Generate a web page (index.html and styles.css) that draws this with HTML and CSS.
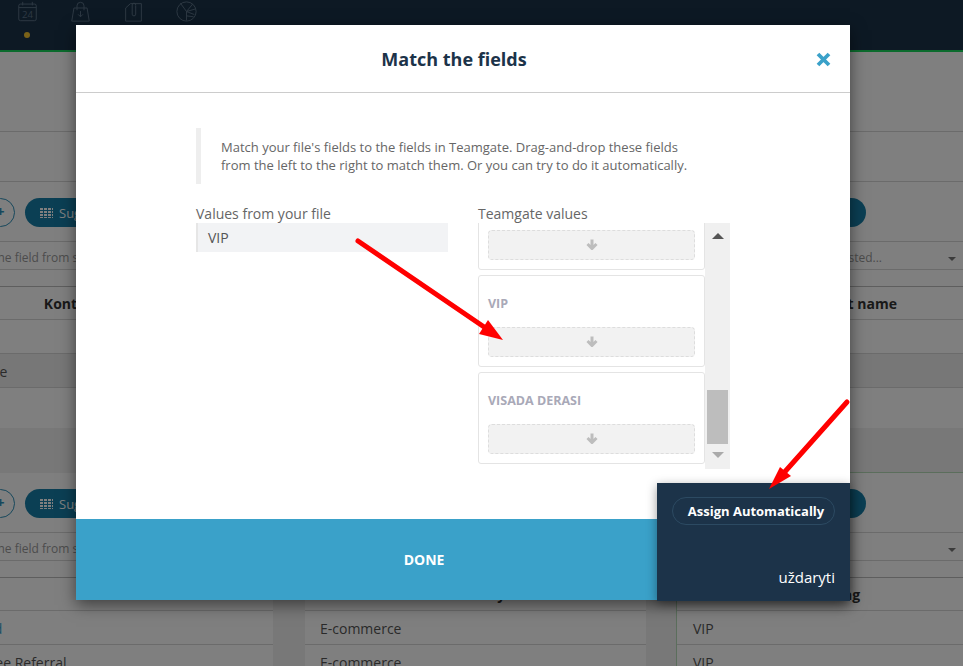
FILE: index.html
```html
<!DOCTYPE html>
<html lang="en">
<head>
    <meta charset="UTF-8">
    <meta name="viewport" content="width=device-width, initial-scale=1.0">
    <title>Match the fields</title>
    <link rel="stylesheet" href="styles.css">
</head>
<body>
    <header class="nav">
        <div class="nav-item active">
            <svg class="nav-icon" viewBox="0 0 24 24">
                <rect x="2" y="3.500" width="20" height="19" rx="2"></rect>
                <path d="M2 7.500h20M6.500 1v4M17.500 1v4"></path>
                <text x="12" y="19.500" class="nav-date">24</text>
            </svg>
        </div>
        <div class="nav-item">
            <svg class="nav-icon" viewBox="0 0 24 24">
                <path d="M4.500 8h15L22 23H2zM8 10.500V5.500a4 4 0 0 1 8 0v5M12 11.500v6.500M9.300 15.300l2.700 2.700 2.700-2.700"></path>
            </svg>
        </div>
        <div class="nav-item">
            <svg class="nav-icon" viewBox="0 0 24 24">
                <path d="M3 23V8l5.500-5H8M9 3h12v20H3M14.500 5v10a2 2 0 0 1-4 0V4.500a2 2 0 0 1 4 0"></path>
            </svg>
        </div>
        <div class="nav-item">
            <svg class="nav-icon" viewBox="0 0 24 24">
                <circle cx="12" cy="12" r="11"></circle>
                <path d="M12 12L5 2.500M12 12l7-8.500M12 12l10.500-3M12 12v10.500M12 12l9 3.500M12 17l8 1"></path>
            </svg>
        </div>
    </header>

    <div class="band band-tall"></div>
    <div class="band band-short"></div>

    <section class="columns">
        <div class="col">
            <div class="toolbar">
                <span class="round-btn">+</span>
                <span class="pill"><span class="grid-icon"></span>Suggest</span>
            </div>
            <div class="select select-first">Select the field from suggested...<span class="caret"></span></div>
            <div class="col-head">Kontakto grupės</div>
            <div class="row"></div>
            <div class="row row-dark">Purchase</div>
            <div class="row row-last"></div>
        </div>
        <div class="col">
            <div class="toolbar"></div>
            <div class="select"></div>
            <div class="col-head"></div>
            <div class="row"></div>
            <div class="row row-dark"></div>
            <div class="row row-last"></div>
        </div>
        <div class="col">
            <div class="toolbar">
                <span class="round-btn"></span>
                <span class="pill"></span>
            </div>
            <div class="select select-third">listed...<span class="caret"></span></div>
            <div class="col-head">Contact name</div>
            <div class="row"></div>
            <div class="row row-dark"></div>
            <div class="row row-last"></div>
        </div>
    </section>

    <section class="columns columns-lower">
        <div class="col">
            <div class="toolbar">
                <span class="round-btn">+</span>
                <span class="pill"><span class="grid-icon"></span>Suggest</span>
            </div>
            <div class="select select-first">Select the field from suggested...<span class="caret"></span></div>
            <div class="col-head"></div>
            <div class="row link">Inbound</div>
            <div class="row">Employee Referral</div>
        </div>
        <div class="col">
            <div class="toolbar"></div>
            <div class="select"></div>
            <div class="col-head">Industry</div>
            <div class="row">E-commerce</div>
            <div class="row">E-commerce</div>
        </div>
        <div class="col col-done">
            <div class="toolbar">
                <span class="round-btn"></span>
                <span class="pill"></span>
            </div>
            <div class="select"><span class="caret"></span></div>
            <div class="col-head">Tag</div>
            <div class="row">VIP</div>
            <div class="row">VIP</div>
        </div>
    </section>

    <div class="overlay"></div>

    <div class="modal">
        <div class="modal-head">
            <h1>Match the fields</h1>
            <svg class="close" viewBox="0 0 15 15">
                <path d="M2 2l11 11M13 2L2 13"></path>
            </svg>
        </div>
        <div class="modal-body">
            <p class="note">Match your file's fields to the fields in Teamgate. Drag-and-drop these fields<br>from the left to the right to match them. Or you can try to do it automatically.</p>
            <div class="match">
                <div class="match-left">
                    <div class="match-label">Values from your file</div>
                    <div class="value">VIP</div>
                </div>
                <div class="match-right">
                    <div class="match-label">Teamgate values</div>
                    <div class="scroller">
                        <div class="card-list">
                            <div class="card">
                                <div class="drop"><svg class="drop-arrow" viewBox="0 0 12 11"><path d="M6 .5v8M1.500 5l4.500 4.500L10.500 5"></path></svg></div>
                            </div>
                            <div class="card">
                                <div class="card-name">VIP</div>
                                <div class="drop"><svg class="drop-arrow" viewBox="0 0 12 11"><path d="M6 .5v8M1.500 5l4.500 4.500L10.500 5"></path></svg></div>
                            </div>
                            <div class="card">
                                <div class="card-name">VISADA DERASI</div>
                                <div class="drop"><svg class="drop-arrow" viewBox="0 0 12 11"><path d="M6 .5v8M1.500 5l4.500 4.500L10.500 5"></path></svg></div>
                            </div>
                        </div>
                        <div class="scrollbar">
                            <span class="scroll-up"></span>
                            <span class="scroll-thumb"></span>
                            <span class="scroll-down"></span>
                        </div>
                    </div>
                </div>
            </div>
        </div>
        <div class="modal-foot">DONE</div>
    </div>

    <div class="hint">
        <div class="hint-btn">Assign Automatically</div>
        <div class="hint-close">uždaryti</div>
    </div>

    <svg class="arrows" viewBox="0 0 963 666">
        <path class="arrow-line" d="M358 241L490 331"></path>
        <path class="arrow-head" d="M503 340L488 320L479 334z"></path>
        <path class="arrow-line" d="M847 402L782 475"></path>
        <path class="arrow-head" d="M769 489L780 467L791 476z"></path>
    </svg>
</body>
</html>
```

FILE: styles.css
```css
html, body {
    height: 100%;
}

body {
    margin: 0;
    height: 666px;
    overflow: hidden;
    position: relative;
    font-family: 'Open Sans', 'Liberation Sans', sans-serif;
    font-size: 14px;
    color: #333;
    background-color: #f0f0f0;
}

/* page behind the dialog */
.nav {
    height: 50px;
    display: flex;
    background-color: #1b3349;
    border-bottom: 2px solid #16d65a;
}

.nav-item {
    width: 52px;
    position: relative;
    display: flex;
    justify-content: center;
    padding-top: 1px;
    padding-left: 1px;
}

.nav-icon {
    width: 21px;
    height: 21px;
    fill: none;
    stroke: #5b7186;
    stroke-width: 1.100;
}

.nav-date {
    font-family: 'Open Sans', sans-serif;
    font-size: 11px;
    text-anchor: middle;
    fill: #5b7186;
    stroke: none;
}

.nav-item.active::after {
    content: "";
    position: absolute;
    left: 24px;
    top: 32px;
    width: 6px;
    height: 6px;
    border-radius: 50%;
    background-color: #f4c430;
}

.band {
    background-color: #fff;
    border-bottom: 1px solid #d6d6d6;
    box-sizing: border-box;
}

.band-tall {
    height: 80px;
}

.band-short {
    height: 50px;
}

.columns {
    display: grid;
    grid-template-columns: 342px 342px 342px;
    column-gap: 31px;
    margin-left: -69px;
    width: 1100px;
}

.columns-lower {
    margin-top: 45px;
}

.col {
    background-color: #fff;
}

.col:nth-child(2) {
    margin-left: 1px;
}

.col:nth-child(2) .row {
    padding-left: 15px;
}

.col-done {
    box-shadow: -1px -1px 0 #b7dcb9;
}

.toolbar {
    height: 60px;
    box-sizing: border-box;
    padding: 16px 0 0 55px;
    display: flex;
    gap: 10px;
    border-bottom: 1px solid #d6d6d6;
}

.round-btn {
    width: 29px;
    height: 29px;
    box-sizing: border-box;
    border: 1px solid #2d8fb8;
    border-radius: 50%;
    color: #2d8fb8;
    font-weight: 700;
    text-align: center;
    line-height: 25px;
}

.pill {
    width: 95px;
    height: 29px;
    padding-left: 15px;
    box-sizing: border-box;
    display: flex;
    align-items: center;
    gap: 6px;
    border-radius: 15px;
    background-color: #167fa8;
    color: #fff;
    font-size: 13px;
    white-space: nowrap;
}

.grid-icon {
    width: 13px;
    height: 10px;
    background:
        repeating-linear-gradient(to right, transparent 0 3px, #167fa8 3px 4px),
        repeating-linear-gradient(to bottom, #fff 0 2px, #167fa8 2px 3px);
}

.select {
    height: 28px;
    box-sizing: border-box;
    position: relative;
    padding-left: 26px;
    font-size: 12px;
    line-height: 31px;
    white-space: nowrap;
    color: #999;
    border-bottom: 1px solid #d6d6d6;
}

.select-third {
    padding-left: 0;
    text-align: right;
    padding-right: 137px;
}

.caret {
    position: absolute;
    left: 271px;
    top: 15px;
    border-style: solid;
    border-width: 4px 4px 0;
    border-color: #777 transparent transparent;
}

.col-head {
    margin-top: 16px;
    height: 34px;
    box-sizing: border-box;
    border-top: 1px solid #bdbdbd;
    border-bottom: 1px solid #d6d6d6;
    font-weight: 700;
    line-height: 33px;
    text-align: center;
    color: #333;
}

.row {
    height: 34px;
    box-sizing: border-box;
    padding-left: 16px;
    line-height: 35px;
    color: #555;
    border-bottom: 1px solid #d6d6d6;
}

.row-dark {
    background-color: #eee;
}

.row-last {
    height: 40px;
    border-bottom: 0;
}

.link {
    color: #3aa1c9;
}

.overlay {
    position: absolute;
    inset: 0;
    background-color: rgba(0, 0, 0, 0.5);
}

/* dialog */
.modal {
    position: absolute;
    left: 76px;
    top: 25px;
    width: 774px;
    height: 575px;
    display: flex;
    flex-direction: column;
    background-color: #fff;
    box-shadow: 0 5px 15px rgba(0, 0, 0, 0.5);
}

.modal-head {
    height: 68px;
    flex: none;
    box-sizing: border-box;
    padding-right: 18px;
    position: relative;
    display: flex;
    justify-content: center;
    align-items: center;
    border-bottom: 1px solid #ccc;
}

.modal-head h1 {
    margin: 0;
    font-size: 18px;
    font-weight: 700;
    color: #1c3349;
}

.close {
    position: absolute;
    left: 740px;
    top: 27px;
    width: 15px;
    height: 15px;
    fill: none;
    stroke: #3aa1c9;
    stroke-width: 3.800;
}

.modal-body {
    flex: 1;
    padding: 35px 120px 0;
}

.note {
    margin: 0;
    padding: 10px 0 10px 20px;
    height: 56px;
    box-sizing: border-box;
    border-left: 5px solid #eee;
    font-size: 13px;
    line-height: 18px;
    white-space: nowrap;
    color: #666;
}

.match {
    display: flex;
    margin-top: 21px;
}

.match-left {
    width: 252px;
    margin-right: 30px;
}

.match-label {
    height: 18px;
    line-height: 18px;
    color: #666;
}

.value {
    height: 29px;
    box-sizing: border-box;
    padding-left: 10px;
    line-height: 29px;
    color: #555;
    background-color: #f2f3f5;
    border-left: 2px solid #e6e6e6;
}

.scroller {
    display: flex;
    height: 246px;
}

.card-list {
    width: 227px;
    padding-bottom: 5px;
    box-sizing: border-box;
    display: flex;
    flex-direction: column;
    justify-content: flex-end;
    gap: 5px;
    overflow: hidden;
}

.card {
    flex: none;
    height: 92px;
    box-sizing: border-box;
    padding: 0 9px 9px;
    display: flex;
    flex-direction: column;
    justify-content: flex-end;
    border: 1px solid #e4e4e4;
    border-radius: 3px;
}

.card-name {
    margin-bottom: 15px;
    font-size: 12.500px;
    font-weight: 700;
    color: #a9a9b8;
}

.drop {
    height: 30px;
    box-sizing: border-box;
    display: flex;
    justify-content: center;
    align-items: center;
    background-color: #f2f2f2;
    border: 1px dashed #ddd;
    border-radius: 4px;
}

.drop-arrow {
    width: 12px;
    height: 11px;
    margin-bottom: 2px;
    fill: none;
    stroke: #bdbdbd;
    stroke-width: 3;
}

.scrollbar {
    width: 25px;
    display: flex;
    flex-direction: column;
    align-items: center;
    background-color: #f0f0f0;
}

.scroll-up {
    margin-top: 10px;
    border-style: solid;
    border-width: 0 6px 6px;
    border-color: transparent transparent #555;
}

.scroll-thumb {
    width: 21px;
    height: 54px;
    margin-top: auto;
    background-color: #bdbdbd;
}

.scroll-down {
    margin-top: 8px;
    margin-bottom: 11px;
    border-style: solid;
    border-width: 6px 6px 0;
    border-color: #aaa transparent transparent;
}

.modal-foot {
    height: 81px;
    flex: none;
    padding-right: 78px;
    display: flex;
    justify-content: center;
    align-items: center;
    background-color: #3aa1c9;
    color: #fff;
    font-weight: 700;
}

/* tour hint over the dialog */
.hint {
    position: absolute;
    left: 657px;
    top: 483px;
    width: 193px;
    height: 118px;
    box-sizing: border-box;
    padding: 14px 15px;
    display: flex;
    flex-direction: column;
    justify-content: space-between;
    background-color: #1c3349;
    box-shadow: 0 3px 10px rgba(0, 0, 0, 0.4);
}

.hint-btn {
    height: 28px;
    box-sizing: border-box;
    padding-left: 5px;
    border: 1px solid #2c4a62;
    border-radius: 14px;
    text-align: center;
    line-height: 26px;
    font-size: 13px;
    font-weight: 700;
    color: #fff;
    white-space: nowrap;
}

.hint-close {
    text-align: right;
    font-size: 15px;
    color: #fff;
}

.arrows {
    position: absolute;
    left: 0;
    top: 0;
    width: 963px;
    height: 666px;
    pointer-events: none;
}

.arrow-line {
    fill: none;
    stroke: #f00;
    stroke-width: 5;
    stroke-linecap: round;
}

.arrow-head {
    fill: #f00;
}
```
